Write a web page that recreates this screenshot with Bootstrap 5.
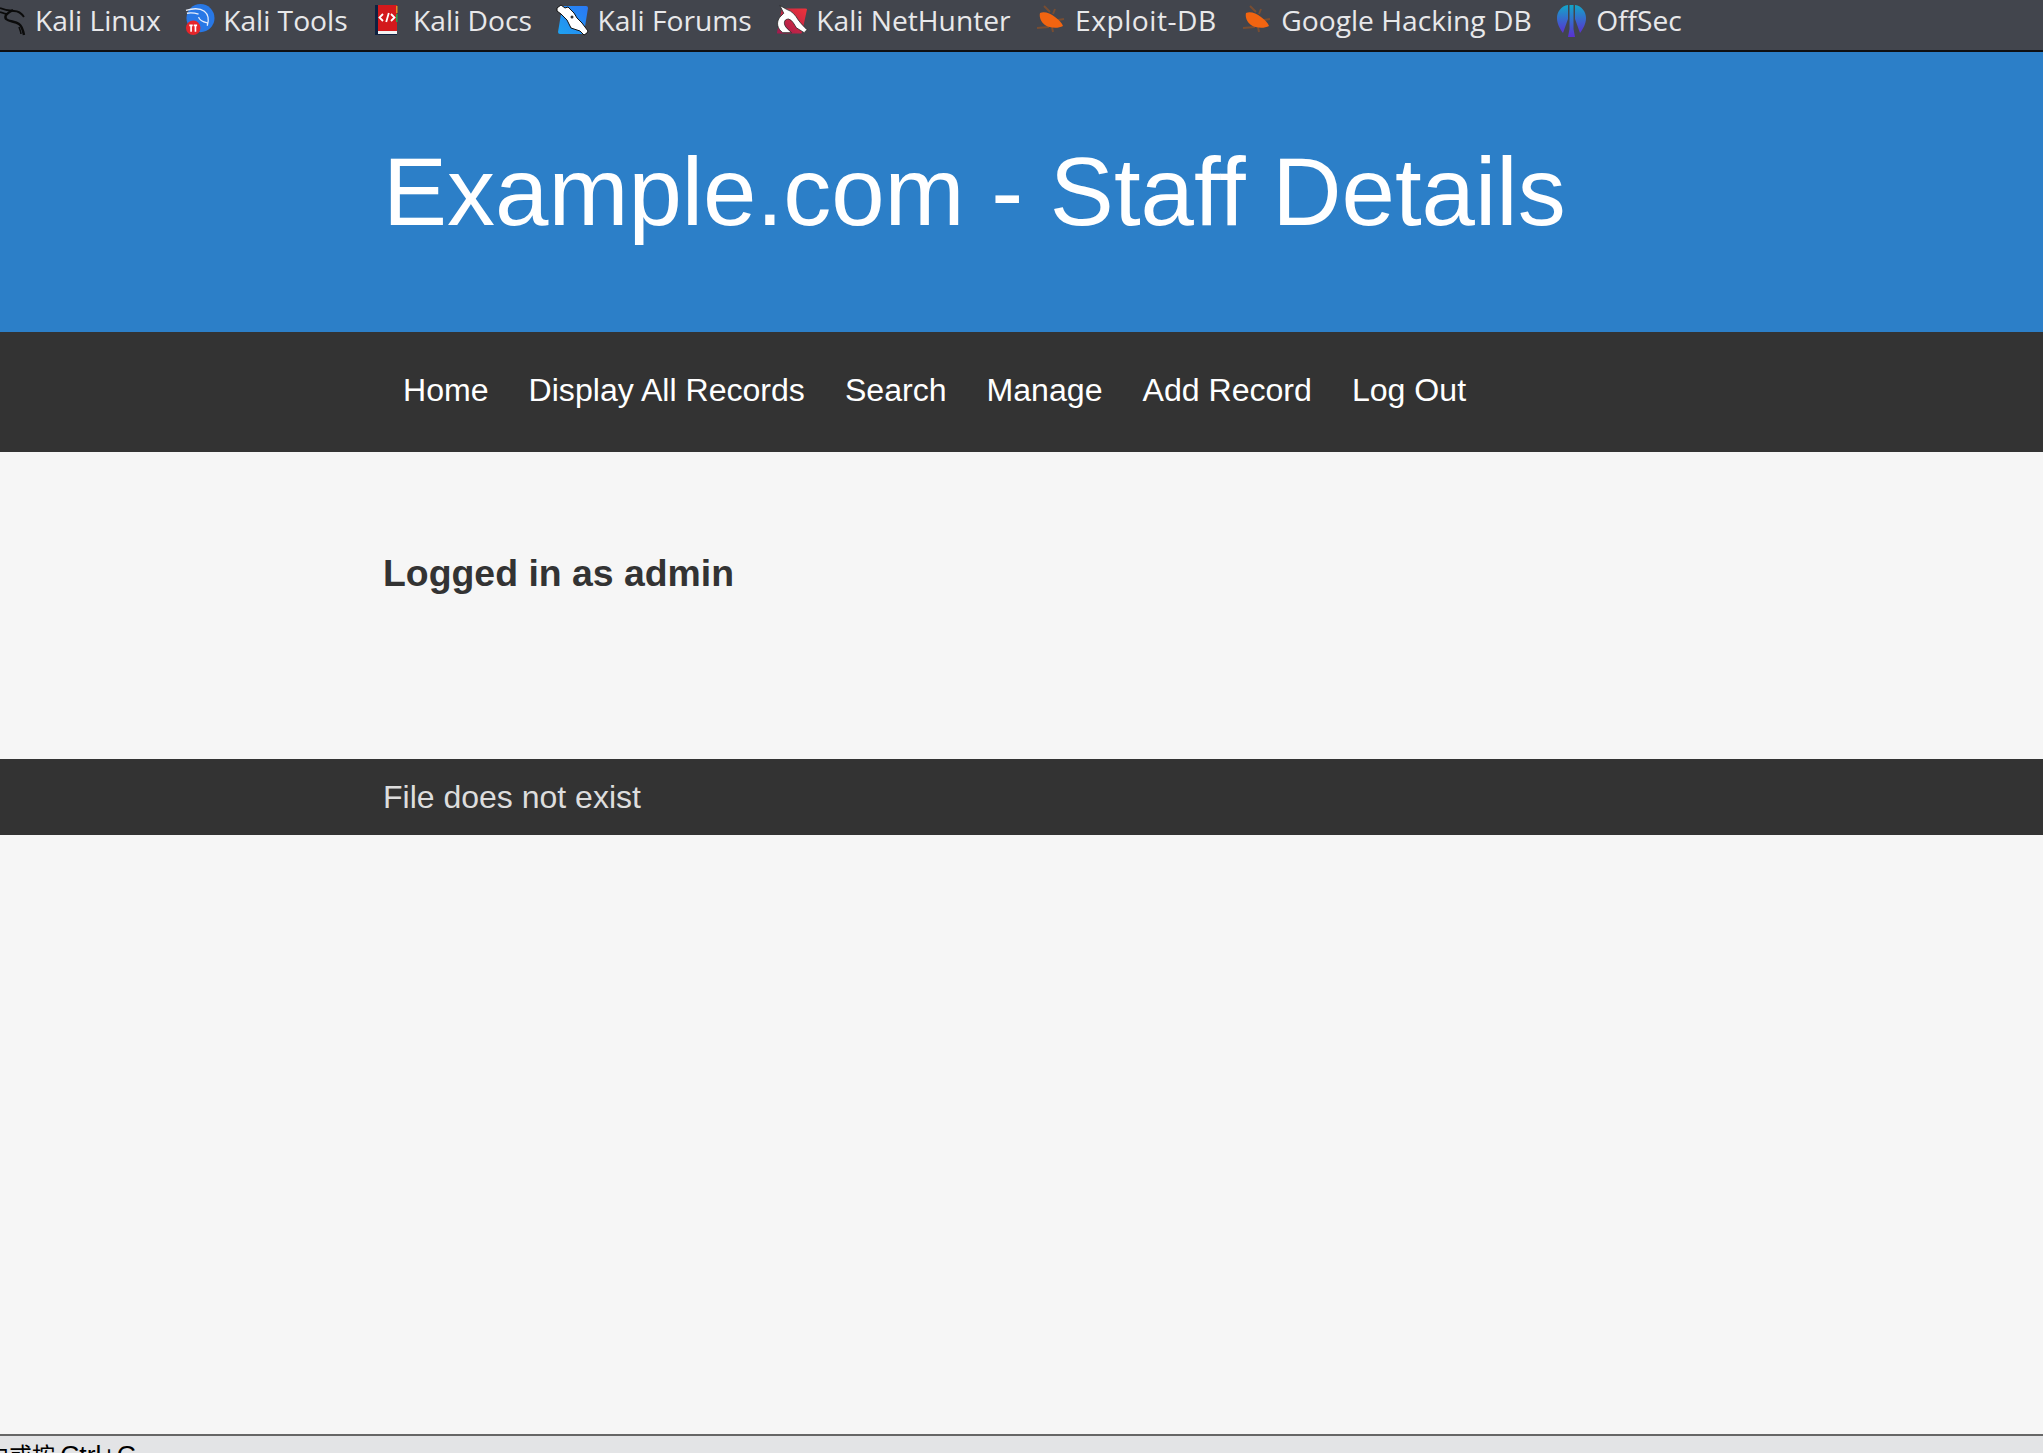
<!DOCTYPE html>
<html lang="en">
<head>
<meta charset="utf-8">
<title>Example.com - Staff Details</title>
<link href="https://cdn.jsdelivr.net/npm/bootstrap@5.3.0/dist/css/bootstrap.min.css" rel="stylesheet">
<style>
html,body{height:100%;}
body{background:#f6f6f6;font-family:"Liberation Sans",Arial,sans-serif;color:#333;overflow:hidden;}
.bm-bar{height:52px;padding-bottom:9px;background:#42454d;border-bottom:2px solid #0f1013;font-family:"Open Sans","Noto Sans",sans-serif;font-size:28.2px;color:#e8e8ea;white-space:nowrap;gap:24.5px;}
.bm-item{gap:8px;}
.bm-item svg{flex:none;}
.bm-wide{letter-spacing:.5px;}
.wrap{width:1275px;margin-left:383px;}
.hero{height:280px;background:#2c7fc8;color:#fff;}
.hero h1{font-size:96px;font-weight:400;line-height:1;margin:0;}
.menu{height:120px;background:#333;padding-bottom:4px;}
.menu a{color:#fff;font-size:32.1px;text-decoration:none;padding:0 20px;}
.main-area{height:307px;}
.main-area h2{font-size:37.4px;font-weight:700;color:#333;margin:0;padding-top:99px;}
.foot{height:76px;background:#333;color:#ddd;font-size:32px;}
.filler{flex:1 1 auto;}
.status{height:19px;background:#e3e4e6;border-top:2px solid #666;overflow:hidden;font-family:"Noto Sans CJK SC","Liberation Sans",sans-serif;font-size:23px;line-height:37px;color:#000;white-space:nowrap;}
.status-line{display:block;margin-left:-14px;}
.status-key{font-family:"Liberation Sans",sans-serif;font-size:26.5px;}
</style>
</head>
<body class="d-flex flex-column">
<div class="bm-bar d-flex align-items-center flex-shrink-0">
  <div class="bm-item d-flex align-items-center">
    <svg width="27" height="36" viewBox="0 0 27 36"><path d="M0 5c5 2 9 3 14 3 5 0 8 3 10 6M0 9c3 1 6 2 7 2" fill="none" stroke="#0b0b0b" stroke-width="1.800"/><path d="M13 7C7 10 4 13 6 16c3 3 9 2 13 5 3 2 4 6 5 11" fill="none" stroke="#0b0b0b" stroke-width="2.400"/><path d="M19 24c1 3 2 5 2 7" fill="none" stroke="#0b0b0b" stroke-width="1.500"/></svg>
    <span>Kali Linux</span>
  </div>
  <div class="bm-item d-flex align-items-center">
    <svg width="30" height="36" viewBox="0 0 31 36"><circle cx="16" cy="15" r="14.500" fill="#2878e6"/><path d="M1 7c7-2 15-2 19 1 4 3 5 9 3 15M2 10c5-1 9 0 12 1M14 14c1 3 5 5 9 6" fill="none" stroke="#e6eefc" stroke-width="1.400"/><circle cx="8.500" cy="25" r="7.500" fill="#e5252a"/><path d="M4.500 22.500h3.500M6.300 22.500V29M9 22.500h3.500M10.800 22.500V29" fill="none" stroke="#fff" stroke-width="1.700"/></svg>
    <span>Kali Tools</span>
  </div>
  <div class="bm-item d-flex align-items-center">
    <svg width="33" height="36" viewBox="3 0 33 36"><rect x="6" y="2" width="22" height="30" fill="#0f2140"/><rect x="9" y="2" width="19" height="26" fill="#d3191c"/><rect x="9" y="28" width="19" height="3" fill="#f2f2f2"/><rect x="27" y="3" width="1.500" height="7" fill="#e88b20"/><rect x="27" y="11" width="1.500" height="8" fill="#2e9e4a"/><path d="M14 11l-3.500 3.500L14 18M22 11l3.500 3.500L22 18M19.800 10l-2.600 9" fill="none" stroke="#fff" stroke-width="1.800"/></svg>
    <span>Kali Docs</span>
  </div>
  <div class="bm-item d-flex align-items-center">
    <svg width="33" height="36" viewBox="0 0 33 36"><defs><linearGradient id="fb" x1="1" y1="0" x2="0" y2="1"><stop offset="0" stop-color="#2a78f5"/><stop offset="1" stop-color="#1ea2f0"/></linearGradient><linearGradient id="nr" x1="1" y1="0" x2="0" y2="1"><stop offset="0" stop-color="#f0333a"/><stop offset="1" stop-color="#a01a4e"/></linearGradient><linearGradient id="og" x1="0" y1="0" x2="0" y2="1"><stop offset="0" stop-color="#12a6c8"/><stop offset="1" stop-color="#5a30d0"/></linearGradient></defs><path d="M8 3h22q2 0 2 2l-4 25q0 1-2 1H4q-2 0-2-2L6 5q0-2 2-2z" fill="url(#fb)"/><path d="M1 5l4-3 4 3 3-1 6 6 3 5 5 5 6 8-1 2-3 2-4-4-9-3-4-8-6-6-4-3z" fill="#fff" stroke="#111" stroke-width="1"/><circle cx="16" cy="14" r="1.500" fill="#333"/></svg>
    <span>Kali Forums</span>
  </div>
  <div class="bm-item d-flex align-items-center">
    <svg width="32" height="36" viewBox="0 0 33 36"><path d="M7 5h23q2 0 2 1l-5 23q0 2-2 2H2q-1 0-1-1L6 6z" fill="url(#nr)"/><path d="M4 2l7 4c6 2 9 6 12 11 3 4 6 7 9 10l-3 3-8-5c-2-3-4-8-8-9-4 0-5 3-4 6 1 3 4 5 7 8H7C1 26 0 19 4 14l4-4z" fill="#fff" stroke="#222" stroke-width=".8"/></svg>
    <span>Kali NetHunter</span>
  </div>
  <div class="bm-item d-flex align-items-center">
    <svg width="32" height="36" viewBox="0 0 32 36"><path d="M9 3l6 6M20 6l-2 5M29 16l-6 1M2 25l12-1M18 29l-1-5" stroke="#8f5128" stroke-width="2" opacity=".7"/><path d="M5 10c4-2 10 0 15 4 4 3 7 6 8 9-5 3-14 2-18-1-4-3-6-8-5-12z" fill="#f26410"/></svg>
    <span class="bm-wide">Exploit-DB</span>
  </div>
  <div class="bm-item d-flex align-items-center">
    <svg width="32" height="36" viewBox="0 0 32 36"><path d="M9 3l6 6M20 6l-2 5M29 16l-6 1M2 25l12-1M18 29l-1-5" stroke="#8f5128" stroke-width="2" opacity=".7"/><path d="M5 10c4-2 10 0 15 4 4 3 7 6 8 9-5 3-14 2-18-1-4-3-6-8-5-12z" fill="#f26410"/></svg>
    <span>Google Hacking DB</span>
  </div>
  <div class="bm-item d-flex align-items-center">
    <svg width="32" height="36" viewBox="0 0 32 36"><path d="M12 2C5 3 1 9 1 15c0 6 3 11 6 15l5-14zM19 2c7 1 11 7 11 13 0 6-3 11-6 15l-5-14z" fill="url(#og)"/><path d="M13.500 2h4v24l1.500 8h-7l1.500-8z" fill="url(#og)"/></svg>
    <span>OffSec</span>
  </div>
</div>
<header class="hero d-flex align-items-center flex-shrink-0"><div class="wrap"><h1>Example.com - Staff Details</h1></div></header>
<nav class="menu d-flex align-items-center flex-shrink-0"><div class="wrap d-flex">
  <a href="#">Home</a><a href="#">Display All Records</a><a href="#">Search</a><a href="#">Manage</a><a href="#">Add Record</a><a href="#">Log Out</a>
</div></nav>
<main class="main-area flex-shrink-0"><div class="wrap"><h2>Logged in as admin</h2></div></main>
<footer class="foot d-flex align-items-center flex-shrink-0"><div class="wrap">File does not exist</div></footer>
<div class="filler"></div>
<div class="status flex-shrink-0"><span class="status-line">中或按 <span class="status-key">Ctrl+C</span></span></div>
</body>
</html>
